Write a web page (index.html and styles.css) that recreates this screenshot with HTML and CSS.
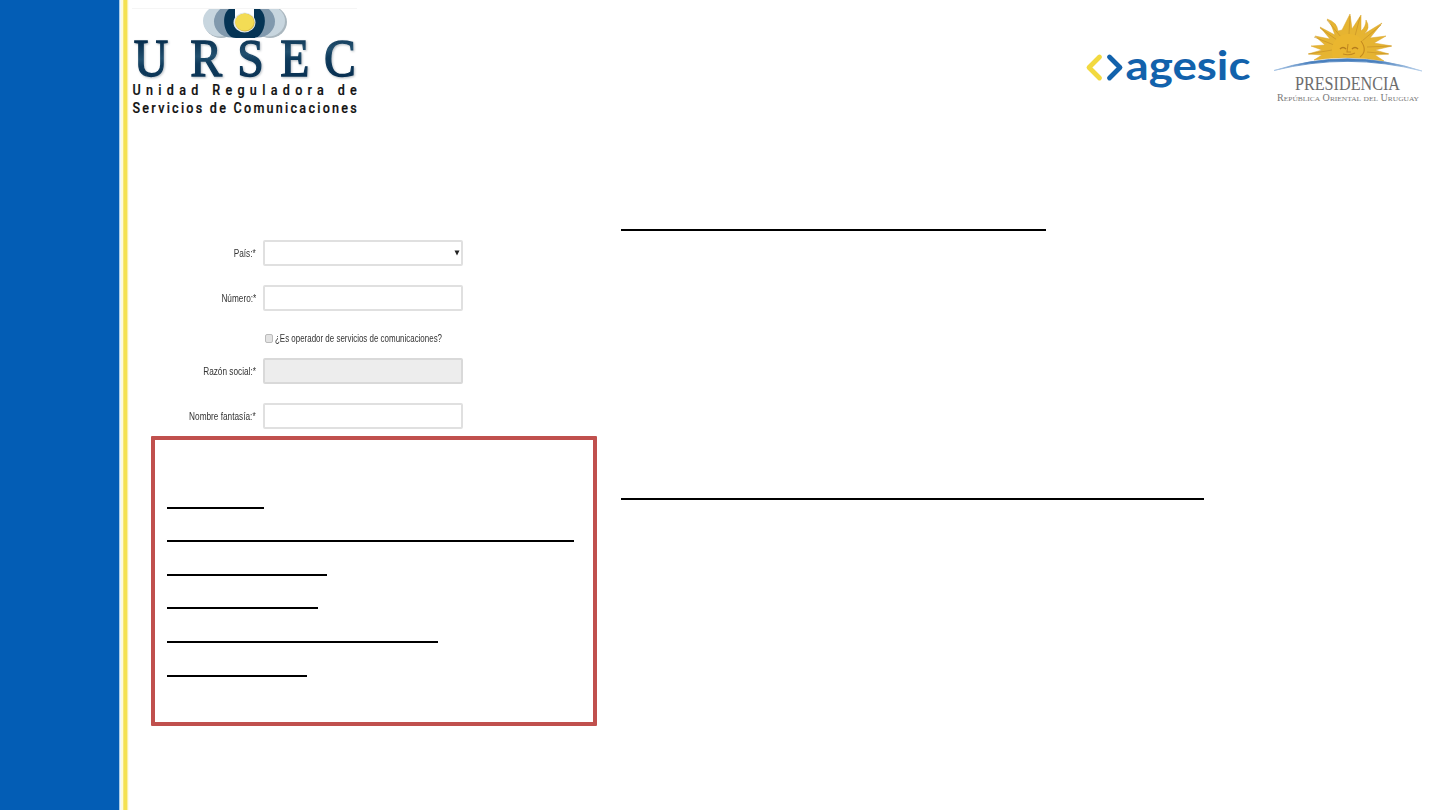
FILE: index.html
```html
<!DOCTYPE html>
<html lang="es">
<head>
<meta charset="utf-8">
<title>URSEC</title>
<link rel="stylesheet" href="styles.css">
</head>
<body>
<div class="slide">
  <aside class="side"></aside>
  <div class="content">
    <header class="header">
      <svg class="ursec" width="232" height="125" viewBox="130 0 232 125">
        <defs>
          <linearGradient id="navy" x1="0" y1="0" x2="0.2" y2="1"><stop offset=".2" stop-color="#052c4c"/><stop offset=".5" stop-color="#22506f"/><stop offset=".62" stop-color="#0f3b5c"/><stop offset="1" stop-color="#062e50"/></linearGradient>
          <clipPath id="top"><rect x="195" y="9" width="100" height="31"/></clipPath>
        </defs>
        <path d="M132 8.500H357" stroke="#f5f5f5"/>
        <g clip-path="url(#top)">
          <ellipse cx="221" cy="22" rx="17" ry="16" fill="#aab7bf"/>
          <ellipse cx="270" cy="22" rx="17" ry="16" fill="#aab7bf"/>
          <ellipse cx="220" cy="21" rx="17" ry="15.500" fill="#c8d6df"/>
          <ellipse cx="268" cy="21" rx="17" ry="15.500" fill="#c8d6df"/>
          <ellipse cx="231" cy="21.500" rx="17" ry="16" fill="#8199ad"/>
          <ellipse cx="258" cy="21.500" rx="17" ry="16" fill="#8199ad"/>
          <path d="M229 9C222 14 223 29 229 35Q231 38 236 38H253Q258 38 260 35C266 28 267 15 260 9H253V25H236V9Z" fill="#053455"/>
          <path d="M235 9H254V18H235Z" fill="#fff"/>
          <ellipse cx="244.500" cy="22.500" rx="11" ry="10" fill="#e2e8ea"/>
          <ellipse cx="245" cy="22.500" rx="9.700" ry="9" fill="#d8bc45"/>
          <ellipse cx="244.500" cy="22" rx="9.300" ry="8.600" fill="#f3dc55"/>
        </g>
        <g transform="scale(.9 1)">
          <text class="ursec-name" x="148.500 211.500 263.500 311.500 360" y="76.500">URSEC</text>
        </g>
        <g transform="translate(132.500 0) scale(.84 1)">
          <text class="ursec-sub" x="0" y="95.500" textLength="267">Unidad Reguladora de</text>
          <text class="ursec-sub" x="0" y="113" textLength="267">Servicios de Comunicaciones</text>
        </g>
      </svg>
      <svg class="partners" width="355" height="115" viewBox="1080 0 355 115">
        <defs>
          <linearGradient id="arc" x1="1274" x2="1422" y1="0" y2="0" gradientUnits="userSpaceOnUse"><stop offset="0" stop-color="#a9c5e5"/><stop offset=".25" stop-color="#497fbd"/><stop offset=".7" stop-color="#4a80bd"/><stop offset="1" stop-color="#b9d1eb"/></linearGradient>
        </defs>
        <g fill="none" stroke-width="4.800" stroke-linecap="round" stroke-linejoin="round">
          <path d="M1099.500 57L1089 67.500L1099.500 78" stroke="#f2d93f"/>
          <path d="M1109.500 57L1120 67.500L1109.500 78" stroke="#1262ac"/>
        </g>
        <text class="agesic" x="1125.500" y="79.500" textLength="125" lengthAdjust="spacingAndGlyphs">agesic</text>
        <path fill="#e6b431" stroke="#d9a52c" stroke-width=".5" d="M1314 60L1322 55L1308 54L1322 50L1311 46L1325 45L1315 36L1330 39L1320 27L1335 35L1332 27Q1330 22 1327 19Q1337 22 1338 31L1342 30L1350 14L1352 29L1361 15L1361 31Q1366 27 1366 20Q1371 28 1364 34L1382 23L1370 38L1386 36L1374 43L1392 46L1375 50L1389 54L1375 55L1384 61Q1348 55 1314 60Z"/>
        <path fill="none" stroke="#c48e24" stroke-width=".9" opacity=".7" d="M1320 28L1337 40M1350 16L1349 34M1360 17L1355 36M1381 25L1362 41M1314 37L1334 45M1309 54L1332 50M1391 46L1367 47M1388 54L1367 52M1327 20L1341 37"/>
        <path fill="#eab62f" d="M1333 58C1329 44 1337 34 1349 34C1362 34 1369 46 1364 58Q1348 55 1333 58Z"/>
        <path d="M1361 41Q1368 51 1360 57M1348 44L1347 52H1351M1343 54Q1349 56 1355 53" stroke="#c48a20" stroke-width="1.100" fill="none"/>
        <path d="M1340 49Q1343 46 1346 49M1352 49Q1355 46 1358 49" stroke="#b57c1d" stroke-width="1.500" fill="none"/>
        <path d="M1274 70.500Q1348 47 1422 71Q1348 52 1274 70.500Z" fill="url(#arc)" stroke="url(#arc)" stroke-width=".8"/>
        <text class="pres" x="1295" y="89.500" textLength="105" lengthAdjust="spacingAndGlyphs">PRESIDENCIA</text>
        <text class="republic" x="1277" y="101" textLength="142" lengthAdjust="spacingAndGlyphs">República Oriental del Uruguay</text>
      </svg>
    </header>
    <main class="main">
      <section class="left">
        <form class="form">
          <div class="row"><label class="label"><span class="narrow">País:*</span></label><div class="field select"><svg width="6" height="6" viewBox="0 0 6 6"><path d="M.5 .5H5.500L3 5.500Z" fill="#222"/></svg></div></div>
          <div class="row"><label class="label"><span class="narrow">Número:*</span></label><div class="field"></div></div>
          <div class="check"><span class="tick"></span><span class="question">¿Es operador de servicios de comunicaciones?</span></div>
          <div class="row social"><label class="label"><span class="narrow">Razón social:*</span></label><div class="field disabled"></div></div>
          <div class="row"><label class="label"><span class="narrow">Nombre fantasía:*</span></label><div class="field"></div></div>
        </form>
        <div class="frame">
          <div class="rule r1"></div><div class="rule r2"></div><div class="rule r3"></div>
          <div class="rule r4"></div><div class="rule r5"></div><div class="rule r6"></div>
        </div>
      </section>
      <section class="right">
        <div class="rule heading-one"></div>
        <div class="rule heading-two"></div>
      </section>
    </main>
  </div>
</div>
</body>
</html>
```
FILE: styles.css
```css
* { box-sizing: border-box; }
body { margin: 0; background: #fff; font-family: "Liberation Sans", Arial, sans-serif; }
.slide { display: flex; width: 1440px; height: 810px; overflow: hidden; }
.side { width: 130px; flex: none; background: linear-gradient(90deg, #035db5 0 119px, #a9cbe6 119px 120px, #f1f8fb 120px 121px, #fdfbdc 121px 123px, #f7e878 123px 124px, #f4e150 124px 127px, #faf0a5 127px 128px, #fffce9 128px 129px, #fff 129px); }
.content { flex: 1; display: flex; flex-direction: column; }
.header { display: flex; justify-content: space-between; height: 125px; padding-right: 5px; }
.header svg { display: block; }
.ursec-name { font: 53px "Liberation Serif", serif; fill: url(#navy); stroke: url(#navy); stroke-width: 1.300px; filter: drop-shadow(1px 1px 1px #b5bcc2); }
.ursec-sub { font: 500 15px Roboto, sans-serif; fill: #111; stroke: #111; stroke-width: .2px; }
.agesic { font: bold 41px Lato, sans-serif; fill: #1262ac; }
.pres { font: 18.500px "Liberation Serif", serif; fill: #6c6c6c; }
.republic { font: 9.500px "Liberation Serif", serif; font-variant: small-caps; fill: #777; }
.main { display: flex; gap: 24px; padding-left: 21px; }
.left { width: 446px; }
.form { height: 311px; padding-top: 115px; }
.row { display: flex; align-items: center; height: 26px; margin-bottom: 19px; }
.label { width: 105px; margin-right: 7px; padding-top: 1px; text-align: right; font-size: 10px; line-height: 14px; color: #333; }
.narrow { display: inline-block; transform: scaleX(.825); transform-origin: right; white-space: nowrap; }
.field { width: 200px; height: 26px; border: 2px solid #e0e0e0; border-radius: 2px; background: #fff; }
.select { display: flex; justify-content: flex-end; padding: 8px 1px 0 0; }
.disabled { background: #ededed; border-color: #d9d9d9; }
.check { display: flex; align-items: center; height: 16px; padding-left: 113px; }
.tick { width: 8px; height: 9px; border: 1px solid #bbb; border-radius: 2px; background: #e3e3e3; margin: 0 2px 0 1px; flex: none; }
.question { padding-top: 1px; font-size: 10px; line-height: 14px; color: #333; white-space: nowrap; transform: scaleX(.795); transform-origin: left; }
.social { margin-top: 12px; }
.frame { height: 290px; border: 4px solid #c0504d; border-radius: 1px; padding: 67px 12px 0; }
.rule { height: 2px; background: #000; }
.r1 { width: 97px; }
.r2 { width: 407px; margin-top: 31px; }
.r3 { width: 160px; margin-top: 32px; }
.r4 { width: 151px; margin-top: 31px; }
.r5 { width: 271px; margin-top: 32px; }
.r6 { width: 140px; margin-top: 32px; }
.right { padding-top: 104px; }
.heading-one { width: 425px; }
.heading-two { width: 583px; margin-top: 267px; }
```
